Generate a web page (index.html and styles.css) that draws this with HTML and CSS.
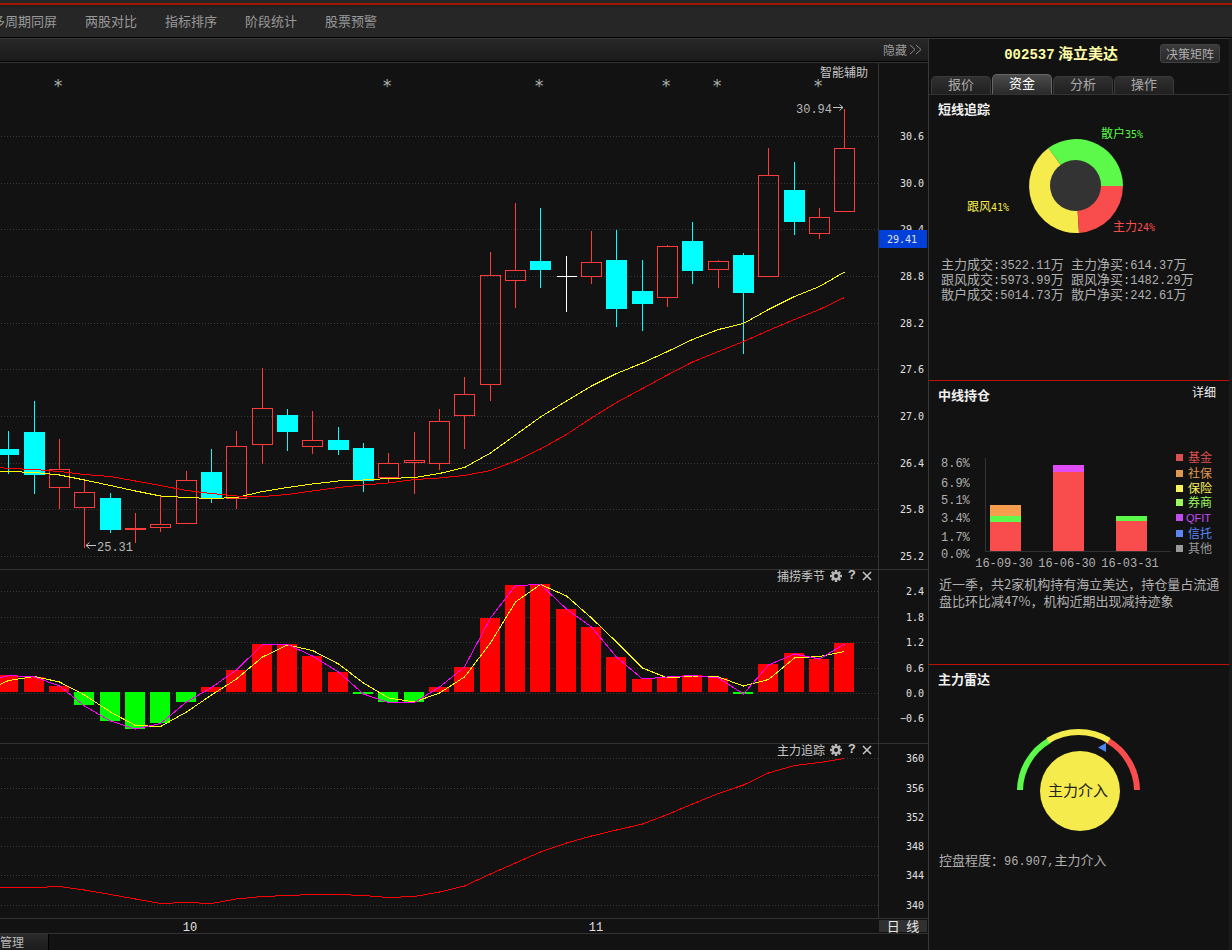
FILE: index.html
```html
<!DOCTYPE html>
<html lang="zh-CN">
<head>
<meta charset="utf-8">
<title>002537 海立美达</title>
<link rel="stylesheet" href="styles.css">
</head>
<body>
<header class="topbar">
  <nav class="menu">
    <a href="#">多周期同屏</a>
    <a href="#">两股对比</a>
    <a href="#">指标排序</a>
    <a href="#">阶段统计</a>
    <a href="#">股票预警</a>
  </nav>
</header>
<main class="workspace">
  <section class="charts">
    <div class="toolbar">
      <button class="hide-btn" type="button">隐藏<svg width="14" height="11" viewBox="0 0 14 11"><path d="M1 1l5 4.500-5 4.500M7 1l5 4.500-5 4.500"/></svg></button>
    </div>

    <div class="panel">
      <svg class="plot" viewBox="0 63 928 507">
        <g id="grid-price"></g>
        <g id="candles"></g>
        <polyline id="ma-short" class="line yellow"/>
        <polyline id="ma-long" class="line red"/>
        <path class="rule" d="M878.500 63v507M0 569.500h928"/>
        <g class="star">
          <text x="58" y="92">*</text><text x="387" y="92">*</text><text x="539" y="92">*</text>
          <text x="666" y="92">*</text><text x="717" y="92">*</text><text x="818" y="92">*</text>
        </g>
        <text class="note" x="796" y="113">30.94</text>
        <path class="arrow" d="M833 107.500h10M839.500 104.500l3.500 3-3.500 3"/>
        <text class="note" x="97" y="551">25.31</text>
        <path class="arrow" d="M96 545.500h-10M89.500 542.500l-3.500 3 3.500 3"/>
        <rect class="tag" x="879" y="230" width="48" height="18"/>
        <text class="axis" x="917" y="243">29.41</text>
      </svg>
      <div class="panel-head"><button class="text-btn" type="button">智能辅助</button></div>
    </div>

    <div class="panel">
      <svg class="plot" viewBox="0 570 928 174">
        <g id="grid-season"></g>
        <g id="bars"></g>
        <polyline id="season-slow" class="line yellow"/>
        <polyline id="season-fast" class="line magenta"/>
        <path class="rule" d="M878.500 570v174M0 743.500h928"/>
      </svg>
      <div class="panel-head tools">
        <span>捕捞季节</span>
        <button type="button" aria-label="设置"><svg width="12" height="12" viewBox="0 0 12 12"><path class="cog" d="M6 0v12M0 6h12M1.800 1.800l8.400 8.400M10.200 1.800l-8.400 8.400"/><circle class="cog-ring" cx="6" cy="6" r="3"/></svg></button>
        <button type="button" aria-label="帮助"><b>?</b></button>
        <button type="button" aria-label="关闭"><svg width="10" height="10" viewBox="0 0 10 10"><path class="cross" d="M1 1l8 8M9 1l-8 8"/></svg></button>
      </div>
    </div>

    <div class="panel">
      <svg class="plot" viewBox="0 744 928 175">
        <g id="grid-track"></g>
        <polyline id="track" class="line red"/>
        <path class="rule" d="M878.500 744v175M0 918.500h928"/>
      </svg>
      <div class="panel-head tools">
        <span>主力追踪</span>
        <button type="button" aria-label="设置"><svg width="12" height="12" viewBox="0 0 12 12"><path class="cog" d="M6 0v12M0 6h12M1.800 1.800l8.400 8.400M10.200 1.800l-8.400 8.400"/><circle class="cog-ring" cx="6" cy="6" r="3"/></svg></button>
        <button type="button" aria-label="帮助"><b>?</b></button>
        <button type="button" aria-label="关闭"><svg width="10" height="10" viewBox="0 0 10 10"><path class="cross" d="M1 1l8 8M9 1l-8 8"/></svg></button>
      </div>
    </div>

    <div class="timeline">
      <svg class="plot" viewBox="0 919 879 14">
        <text class="month" x="190" y="931">10</text>
        <text class="month" x="596" y="931">11</text>
      </svg>
      <button class="period" type="button">日&ensp;线</button>
    </div>
    <footer class="tabs-bottom"><button type="button">管理</button></footer>
  </section>

  <aside class="side">
    <div class="stock">
      <h1><span class="code">002537</span> 海立美达</h1>
      <button type="button">决策矩阵</button>
    </div>
    <div class="side-tabs">
      <button type="button">报价</button>
      <button type="button" class="active">资金</button>
      <button type="button">分析</button>
      <button type="button">操作</button>
    </div>

    <section class="block">
      <h2>短线追踪</h2>
      <svg class="figure" viewBox="929 117 300 139">
        <path fill="#5cf84a" d="M1076 186h47A47 47 0 0 0 1048.400 148z"/>
        <path fill="#f6eb4c" d="M1076 186L1048.400 148A47 47 0 0 0 1079 232.900z"/>
        <path fill="#f94d4d" d="M1076 186L1079 232.900A47 47 0 0 0 1123 186z"/>
        <circle cx="1075.500" cy="185.500" r="25.500" fill="#333"/>
        <text class="lbl" x="1101" y="138" fill="#5cf84a">散户<tspan class="pct">35%</tspan></text>
        <text class="lbl" x="967" y="211" fill="#f6eb4c">跟风<tspan class="pct">41%</tspan></text>
        <text class="lbl" x="1113" y="231" fill="#f94d4d">主力<tspan class="pct">24%</tspan></text>
      </svg>
      <div class="stats">
        <p>主力成交<span class="num">:3522.11</span>万</p><p>主力净买<span class="num">:614.37</span>万</p>
        <p>跟风成交<span class="num">:5973.99</span>万</p><p>跟风净买<span class="num">:1482.29</span>万</p>
        <p>散户成交<span class="num">:5014.73</span>万</p><p>散户净买<span class="num">:242.61</span>万</p>
      </div>
    </section>

    <section class="block">
      <div class="block-head"><h2>中线持仓</h2><a href="#">详细</a></div>
      <svg class="figure" viewBox="929 403 300 172">
        <path class="base" d="M985.500 458v93.500h185"/>
        <g class="solid">
          <path fill="#f79e4e" d="M990 505h31v11h-31z"/><path fill="#5cf84a" d="M990 516h31v6h-31zM1116 516h31v5h-31z"/>
          <path fill="#e04cf5" d="M1053 465h31v7h-31z"/>
          <path fill="#f94d4d" d="M990 522h31v29h-31zM1053 472h31v79h-31zM1116 521h31v30h-31z"/>
        </g>
        <g class="scale">
          <text x="941" y="467">8.6%</text><text x="941" y="487">6.9%</text><text x="941" y="504">5.1%</text>
          <text x="941" y="522">3.4%</text><text x="941" y="541">1.7%</text><text x="941" y="558">0.0%</text>
        </g>
        <g class="scale mid">
          <text x="1004" y="567">16-09-30</text><text x="1067" y="567">16-06-30</text><text x="1130" y="567">16-03-31</text>
        </g>
        <g class="legend">
          <g fill="#d9504f"><rect x="1176" y="454" width="7" height="7"/><text x="1188" y="462">基金</text></g>
          <g fill="#e0984f"><rect x="1176" y="470" width="7" height="7"/><text x="1188" y="478">社保</text></g>
          <g fill="#fbf35c"><rect x="1176" y="485" width="7" height="7"/><text x="1188" y="493">保险</text></g>
          <g fill="#9cf95c"><rect x="1176" y="499" width="7" height="7"/><text x="1188" y="507">券商</text></g>
          <g fill="#c44cf0"><rect x="1176" y="514" width="7" height="7"/><text class="latin" x="1186" y="522">QFIT</text></g>
          <g fill="#5c86f5"><rect x="1176" y="530" width="7" height="7"/><text x="1188" y="538">信托</text></g>
          <g fill="#999"><rect x="1176" y="545" width="7" height="7"/><text x="1188" y="553">其他</text></g>
        </g>
      </svg>
      <p class="summary">近一季，共2家机构持有海立美达，持仓量占流通盘比环比减47%，机构近期出现减持迹象</p>
    </section>

    <section class="block">
      <h2>主力雷达</h2>
      <svg class="figure" viewBox="929 687 300 164">
        <g class="gauge">
          <path stroke="#5cf84a" d="M1020 790A58.500 58.500 0 0 1 1049.250 740.500"/>
          <path stroke="#f94d4d" d="M1107.750 740.500A58.500 58.500 0 0 1 1137 790"/>
          <path stroke="#f6eb4c" d="M1048 740.600A58.500 58.500 0 0 1 1109 740.600"/>
        </g>
        <path fill="#4c86f0" d="M1098 747.500l8-4.500v9z"/>
        <circle cx="1080" cy="791" r="40" fill="#f6eb4c"/>
        <text class="verdict" x="1078" y="796">主力介入</text>
      </svg>
      <p class="summary">控盘程度：<span class="num">96.907,</span>主力介入</p>
    </section>
  </aside>
</main>
<script src="chart.js"></script>
</body>
</html>
```
FILE: styles.css
```css
* { box-sizing: border-box; margin: 0; padding: 0; }
body {
  min-height: 100vh;
  display: flex;
  flex-direction: column;
  background: #121212;
  color: #b0b0b0;
  font: 13px/16px "Noto Sans CJK SC", sans-serif;
  overflow-x: hidden;
}
button { border: 0; background: none; color: inherit; font: inherit; cursor: pointer; }
a { color: inherit; text-decoration: none; }
svg { display: block; }

.topbar {
  height: 38px;
  border-top: 3px solid #262626;
  border-bottom: 1px solid #000;
  background: linear-gradient(#1a1a1a, #262626 6px);
  overflow: hidden;
}
.menu {
  display: flex;
  gap: 28px;
  height: 34px;
  padding-top: 8px;
  margin-left: -8px;
  border-top: 2px solid #a51705;
  color: #999;
}
.menu a { white-space: nowrap; }

.workspace { flex: 1; display: grid; grid-template-columns: minmax(0, 1fr) 304px; }
.charts { display: flex; flex-direction: column; border-top: 1px solid #383838; }
.toolbar {
  display: flex;
  justify-content: flex-end;
  height: 24px;
  padding: 0 5px 2px 0;
  background: linear-gradient(#282828, #1a1a1a);
  border-bottom: 1px solid #333;
  box-shadow: inset 0 -1px #000;
}
.hide-btn { display: flex; align-items: center; gap: 2px; font-size: 12px; color: #999; }
.hide-btn path { fill: none; stroke: #888; }

.panel { position: relative; }
.plot { width: 100%; height: auto; overflow: visible; }
.panel-head { position: absolute; top: 0; right: 60px; font-size: 12px; color: #c8c8c8; line-height: 18px; }
.tools { display: flex; align-items: center; gap: 5px; right: 56px; line-height: 12px; }
.tools button { display: flex; align-items: center; justify-content: center; height: 12px; min-width: 10px; }
.tools b { font: bold 13px/12px "Liberation Mono", monospace; }
.cog { stroke: #b8b8b8; stroke-width: 2.5; }
.cog-ring { fill: #121212; stroke: #b8b8b8; stroke-width: 2; }
.cross { stroke: #c8c8c8; stroke-width: 1.5; }

.rule, .base { fill: none; stroke: #333; shape-rendering: crispEdges; }
.dots { stroke: #3a3a3a; stroke-dasharray: 1 2; shape-rendering: crispEdges; }
.axis { font: 10px "DejaVu Sans Mono", monospace; fill: #e0e0e0; text-anchor: end; }
.month { font: 12px "Liberation Mono", monospace; fill: #e0e0e0; text-anchor: middle; }
.note { font: 12px "Liberation Mono", monospace; fill: #b8b8b8; }
.star { font: 17px "DejaVu Sans Mono", monospace; fill: #a8b0a8; text-anchor: middle; }
.arrow { fill: none; stroke: #c8c8c8; }
.tag { fill: #0040d8; }
.line { fill: none; stroke-width: 1; shape-rendering: crispEdges; }
.yellow { stroke: #ff0; }
.red { stroke: #f00; }
.magenta { stroke: #f0f; }
.candle { shape-rendering: crispEdges; }
.up { fill: none; stroke: #ff3a3a; }
.down { fill: #0ff; stroke: #0ff; }
.flat { fill: none; stroke: #fff; }
.pos { fill: #f00; shape-rendering: crispEdges; }
.neg { fill: #0f0; shape-rendering: crispEdges; }

.timeline { display: grid; grid-template-columns: minmax(0, 1fr) 48px; padding-right: 1px; border-bottom: 1px solid #333; }
.period { height: 12px; margin-top: 1px; background: #303030; color: #e8e8e8; line-height: 12px; }
.tabs-bottom { flex: 1; }
.tabs-bottom button {
  width: 49px;
  height: 16px;
  text-align: left;
  font-size: 12px;
  color: #b8b8b8;
  background: linear-gradient(#2a2a2a, #1c1c1c);
  border-right: 1px solid #000;
}

.side { border: solid #383838; border-width: 1px 3px 0 1px; border-right-color: #1a1a1a; }
.stock { display: flex; align-items: center; justify-content: flex-end; gap: 42px; height: 35px; padding: 0 9px 6px 0; }
.stock h1 { font-size: 15px; line-height: 18px; color: #ffffa8; }
.code { font: bold 14px/18px "Liberation Mono", monospace; }
.stock button {
  width: 60px;
  height: 19px;
  border: 1px solid #424242;
  border-radius: 3px;
  background: linear-gradient(#3a3a3a, #2a2a2a);
  font-size: 12px;
  line-height: 16px;
}
.side-tabs { display: flex; align-items: flex-end; gap: 1px; height: 21px; padding-left: 2px; border-bottom: 1px solid #333; }
.side-tabs button {
  width: 60px;
  height: 18px;
  padding-bottom: 4px;
  border: 1px solid #3a3a3a;
  border-bottom: 0;
  border-radius: 5px 5px 0 0;
  background: linear-gradient(#303030, #202020);
  color: #aaa;
  line-height: 13px;
}
.side-tabs .active { height: 20px; border-color: #666; background: linear-gradient(#4c4c4c, #2a2a2a); color: #fff; }

.block { padding-top: 5px; }
.block + .block { border-top: 1px solid #c01005; }
.block h2 { padding-left: 9px; font-size: 13px; line-height: 17px; color: #f0f0f0; }
.block-head { display: flex; justify-content: space-between; padding-right: 13px; }
.block-head a { font-size: 12px; color: #f0f0f0; line-height: 12px; }
.figure { width: 100%; height: auto; }
.stats { display: grid; grid-template-columns: 130px 1fr; padding: 0 0 79px 12px; line-height: 15px; }
.num { font: 12px/0 "Liberation Mono", monospace; }
.lbl { font-size: 12px; }
.pct { font: 10px "DejaVu Sans Mono", monospace; }
.scale { font: 12px "Liberation Mono", monospace; fill: #b0b0b0; }
.mid { text-anchor: middle; }
.legend { font-size: 12px; }
.latin { font: 11px "Liberation Sans", sans-serif; }
.solid, .legend rect { shape-rendering: crispEdges; }
.summary { padding: 0 4px 55px 10px; line-height: 17px; }
.gauge { fill: none; stroke-width: 6; }
.verdict { font-size: 15px; fill: #222; text-anchor: middle; }
```
FILE: chart.js
```js
const NS = "http://www.w3.org/2000/svg";
const centre = i => Math.round(8.33 + 25.333 * i);

function add(parent, tag, attrs, text) {
  const el = document.createElementNS(NS, tag);
  for (const k in attrs) el.setAttribute(k, attrs[k]);
  if (text) el.textContent = text;
  document.getElementById(parent).appendChild(el);
}

function grid(id, rows) {
  rows.forEach(([y, label]) => {
    add(id, "path", { class: "dots", d: `M1 ${y}.5H878` });
    add(id, "text", { class: "axis", x: 924, y: y + 4 }, label);
  });
}
grid("grid-price", [[136, "30.6"], [183, "30.0"], [229, "29.4"], [276, "28.8"], [323, "28.2"],
  [369, "27.6"], [416, "27.0"], [463, "26.4"], [509, "25.8"], [556, "25.2"]]);
grid("grid-season", [[591, "2.4"], [617, "1.8"], [642, "1.2"], [668, "0.6"], [693, "0.0"], [718, "−0.6"]]);
grid("grid-track", [[758, "360"], [788, "356"], [817, "352"], [846, "348"], [875, "344"], [905, "340"]]);

// kind, high, body top, body bottom, low
const candles = [
  ["down", 431, 449, 455, 474], ["down", 401, 432, 475, 494], ["up", 439, 469, 488, 509],
  ["up", 481, 492, 508, 548], ["down", 493, 498, 530, 533], ["up", 513, 528, 530, 543],
  ["up", 495, 524, 528, 532], ["up", 471, 480, 524, 524], ["down", 449, 472, 499, 503],
  ["up", 431, 446, 499, 509], ["up", 368, 408, 445, 464], ["down", 409, 415, 432, 451],
  ["up", 411, 440, 447, 454], ["down", 427, 440, 450, 455], ["down", 443, 448, 481, 492],
  ["up", 453, 463, 478, 482], ["up", 432, 460, 463, 494], ["up", 409, 421, 464, 470],
  ["up", 377, 394, 416, 449], ["up", 252, 275, 385, 401], ["up", 203, 270, 281, 308],
  ["down", 208, 261, 270, 288], ["flat", 256, 276, 277, 312], ["up", 231, 262, 277, 284],
  ["down", 230, 260, 309, 327], ["down", 260, 291, 304, 331], ["up", 245, 246, 298, 307],
  ["down", 222, 241, 271, 284], ["up", 260, 261, 270, 288], ["down", 253, 255, 293, 354],
  ["up", 148, 175, 277, 277], ["down", 162, 190, 222, 235], ["up", 208, 217, 234, 239],
  ["up", 109, 148, 212, 212]
];
candles.forEach(([kind, high, top, bottom, low], i) => {
  const x = centre(i);
  let d = `M${x - 9.5} ${top + 0.5}h20v${bottom - top - 1}h-20z`;
  d += `M${x + 0.5} ${high}V${top}M${x + 0.5} ${bottom}V${low}`;
  add("candles", "path", { class: "candle " + kind, d });
});

const bars = [675, 677, 686, 705, 721, 729, 723, 702, 687, 670, 644, 644, 656, 672, 694, 702, 702,
  687, 667, 618, 585, 584, 609, 627, 657, 679, 677, 675, 678, 694, 664, 653, 659, 643];
bars.forEach((y, i) => {
  add("bars", "rect", {
    class: y < 692 ? "pos" : "neg",
    x: centre(i) - 10, y: Math.min(y, 692), width: 20, height: Math.abs(y - 692)
  });
});

function plot(id, start, values) {
  const pts = [`0,${start}`].concat(values.map((y, i) => `${centre(i) + 0.5},${y}`));
  document.getElementById(id).setAttribute("points", pts.join(" "));
}
plot("ma-short", 471.5, [471.5, 472.5, 475, 480, 485.5, 491, 496, 497.5, 498.5, 497.5, 491.5, 487.5, 484,
  481, 480, 478.5, 477.5, 473.5, 467.5, 453, 435, 417, 401, 386, 373.5, 363, 351.5, 339.5, 329.5, 323.5,
  309.5, 296.5, 286.5, 272]);
plot("ma-long", 467.5, [468.5, 469.5, 471.5, 474.5, 476.5, 481, 485.5, 490.5, 493.5, 496, 496.5, 494.5, 491,
  487.5, 485, 483, 479.5, 478, 475.5, 470.5, 461, 449, 434.5, 418, 402.5, 388.5, 375, 362, 351.5, 341.5,
  330.5, 319.5, 309.5, 297.5]);
plot("season-fast", 678, [675.5, 677, 686, 706, 721, 729, 723.5, 702, 687.5, 670, 644.5, 644.5, 656, 672, 694,
  702.5, 702.5, 687, 667, 618, 585.5, 584.5, 609, 627, 657, 679, 677, 675.5, 678, 694, 665, 654, 659, 644]);
plot("season-slow", 684.5, [680.5, 676.5, 682, 695, 712, 725.5, 726.5, 712, 695, 679, 657, 645, 650.5, 664, 683,
  698, 702, 693, 677, 643, 602, 584.5, 596, 618, 642, 668, 678, 676, 677, 686, 679.5, 658, 656.5, 651.5]);
plot("track", 887.5, [887.5, 887.5, 886.5, 890, 894.5, 899, 903.5, 902.5, 903.5, 899, 896.5, 895.5, 894.5, 894.5,
  895.5, 897.5, 896.5, 892, 886, 874, 863, 852, 843, 836, 830, 824, 814.5, 804, 793.5, 785, 773, 765.5,
  762.5, 758.5]);
```
